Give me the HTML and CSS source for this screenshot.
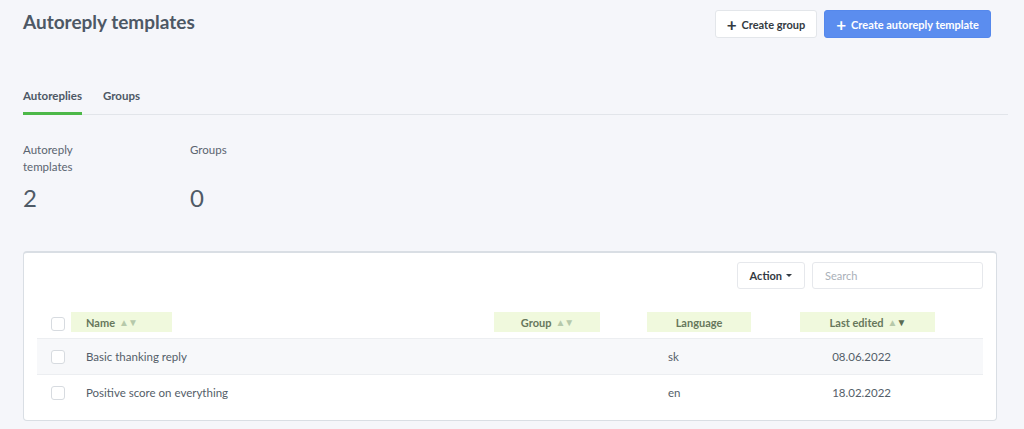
FILE: index.html
```html
<!DOCTYPE html>
<html lang="en">
<head>
    <meta charset="UTF-8">
    <meta name="viewport" content="width=device-width, initial-scale=1.0">
    <title>Autoreply templates</title>
    <link rel="stylesheet" href="styles.css">
</head>
<body>
    <div class="page">
        <div class="page-header">
            <h1 class="page-title">Autoreply templates</h1>
            <div class="header-actions">
                <button class="btn btn-default"><span class="plus">+</span>Create group</button>
                <button class="btn btn-primary"><span class="plus">+</span>Create autoreply template</button>
            </div>
        </div>

        <div class="tabs">
            <a class="tab active">Autoreplies</a>
            <a class="tab">Groups</a>
        </div>

        <div class="stats">
            <div class="stat">
                <div class="stat-label">Autoreply templates</div>
                <div class="stat-value">2</div>
            </div>
            <div class="stat">
                <div class="stat-label">Groups</div>
                <div class="stat-value">0</div>
            </div>
        </div>

        <div class="card">
            <div class="toolbar">
                <button class="btn btn-default btn-action">Action <span class="caret"></span></button>
                <input class="search" type="text" placeholder="Search">
            </div>

            <div class="table">
                <div class="row head">
                    <div class="cell check"><span class="checkbox"></span></div>
                    <div class="cell"><span class="th th-name">Name <span class="sort">▲▼</span></span></div>
                    <div class="cell"><span class="th th-group">Group <span class="sort">▲▼</span></span></div>
                    <div class="cell"><span class="th th-lang">Language</span></div>
                    <div class="cell"><span class="th th-date">Last edited <span class="sort">▲<b>▼</b></span></span></div>
                </div>
                <div class="row striped">
                    <div class="cell check"><span class="checkbox"></span></div>
                    <div class="cell name">Basic thanking reply</div>
                    <div class="cell"></div>
                    <div class="cell lang">sk</div>
                    <div class="cell date">08.06.2022</div>
                </div>
                <div class="row">
                    <div class="cell check"><span class="checkbox"></span></div>
                    <div class="cell name">Positive score on everything</div>
                    <div class="cell"></div>
                    <div class="cell lang">en</div>
                    <div class="cell date">18.02.2022</div>
                </div>
            </div>
        </div>
    </div>
</body>
</html>
```

FILE: styles.css
```css
* {
    margin: 0;
    padding: 0;
    box-sizing: border-box;
}

body {
    background-color: #f5f6fa;
    font-family: Lato, "Open Sans", sans-serif;
    color: #4f5a66;
    overflow: hidden;
}

.page {
    padding: 0 16px 0 23px;
}

/* 顶部标题和按钮 */
.page-header {
    display: flex;
    justify-content: space-between;
    align-items: flex-start;
    padding-right: 17px;
}

.page-title {
    font-size: 19px;
    font-weight: 700;
    color: #4d5865;
    margin-top: 10px;
}

.header-actions {
    display: flex;
    gap: 7px;
    margin-top: 10px;
}

.btn {
    height: 28px;
    padding: 0 11px;
    border-radius: 3px;
    font-family: inherit;
    font-size: 11px;
    font-weight: 700;
    display: flex;
    align-items: center;
    cursor: pointer;
}

.btn-default {
    background-color: #fff;
    border: 1px solid #e3e6ea;
    color: #333a42;
}

.btn-primary {
    background-color: #5b8def;
    border: 1px solid #5588ec;
    color: #fff;
}

.plus {
    font-size: 17px;
    font-weight: 700;
    margin-right: 5px;
    line-height: 1;
}

/* 标签页 */
.tabs {
    display: flex;
    gap: 21px;
    margin-top: 51px;
    border-bottom: 1px solid #e2e5ea;
}

.tab {
    font-size: 11.5px;
    font-weight: 700;
    color: #4d5865;
    padding-bottom: 10px;
    border-bottom: 3px solid transparent;
    margin-bottom: -1px;
}

.tab.active {
    border-bottom-color: #4cb848;
}

/* 统计数字 */
.stats {
    display: flex;
    margin-top: 26px;
}

.stat {
    width: 167px;
}

.stat-label {
    font-size: 11.5px;
    line-height: 17px;
    color: #5a6470;
    width: 60px;
}

.stat-value {
    font-size: 24px;
    color: #4f5a66;
    margin-top: 8px;
}

.stats .stat:nth-child(2) .stat-value {
    margin-top: 25px;
}

/* 表格卡片 */
.card {
    margin-top: 39px;
    margin-right: 11px;
    background-color: #fff;
    border: 1px solid #d9dee4;
    border-top-width: 2px;
    border-radius: 4px;
    padding: 9px 13px 10px 13px;
}

.toolbar {
    display: flex;
    justify-content: flex-end;
    gap: 7px;
}

.btn-action {
    height: 27px;
    padding: 0 12px;
    font-size: 11px;
    border-color: #e6e8ec;
}

.caret {
    display: inline-block;
    margin-left: 4px;
    border-left: 3px solid transparent;
    border-right: 3px solid transparent;
    border-top: 3px solid #333a42;
}

.search {
    width: 171px;
    height: 27px;
    border: 1px solid #e6e8ec;
    border-radius: 3px;
    padding: 0 12px;
    font-family: inherit;
    font-size: 11px;
    outline: none;
}

.search::placeholder {
    color: #a9b0b8;
}

.table {
    margin-top: 23px;
}

.row {
    display: grid;
    grid-template-columns: 34px 423px 153px 153px 1fr;
    align-items: center;
    height: 36px;
    border-top: 1px solid #eceef1;
    font-size: 11.5px;
    color: #545e69;
}

.row.head {
    height: 26px;
    border-top: none;
    align-items: start;
}

.row.striped {
    background-color: #f7f8fa;
}

.cell.check {
    display: flex;
    justify-content: center;
    padding-left: 8px;
}

.row.head .cell.check {
    padding-top: 5px;
}

.checkbox {
    width: 14px;
    height: 14px;
    border: 1px solid #d7dbe0;
    border-radius: 3px;
    background-color: #fff;
}

.th {
    display: flex;
    align-items: center;
    height: 20px;
    background-color: #f0f9dd;
    font-weight: 700;
    font-size: 11px;
    color: #67775c;
}

.th-name {
    width: 101px;
    padding-left: 15px;
}

.th-group {
    width: 106px;
    justify-content: center;
}

.th-lang {
    width: 104px;
    justify-content: center;
}

.th-date {
    width: 135px;
    justify-content: center;
}

.sort {
    font-size: 10px;
    color: #b6c9aa;
    margin-left: 4px;
    letter-spacing: -1px;
}

.sort b {
    color: #5b6b52;
}

.cell.name {
    padding-left: 15px;
}

.cell.lang {
    padding-left: 21px;
}

.cell.date {
    width: 135px;
    text-align: right;
    padding-right: 44px;
}
```
